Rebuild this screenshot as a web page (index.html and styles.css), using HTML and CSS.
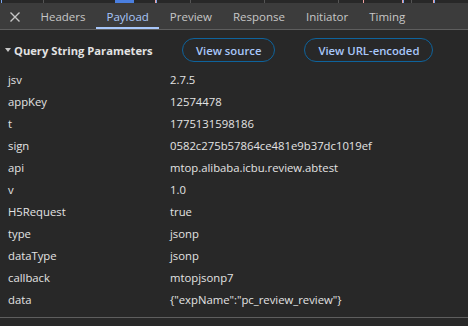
FILE: index.html
```html
<!DOCTYPE html>
<html>
<head>
<meta charset="utf-8">
<link rel="stylesheet" href="styles.css">
</head>
<body>
<div class="strip"></div>
<div class="tabbar">
  <div class="close">
    <svg width="12" height="12" viewBox="0 0 12 12"><path d="M1.5 1.5 L10.5 10.5 M10.5 1.5 L1.5 10.5" stroke="#c7c7c7" stroke-width="1.4" fill="none"/></svg>
  </div>
  <div class="tab">Headers</div>
  <div class="tab active">Payload</div>
  <div class="tab">Preview</div>
  <div class="tab">Response</div>
  <div class="tab">Initiator</div>
  <div class="tab">Timing</div>
</div>
<div class="section">
  <div class="section-head">
    <div class="title"><span class="tri"></span>Query String Parameters</div>
    <button class="btn btn-src">View source</button>
    <button class="btn btn-url">View URL-encoded</button>
  </div>
  <div class="rows">
    <div class="row"><span class="key">jsv</span><span class="val">2.7.5</span></div>
    <div class="row"><span class="key">appKey</span><span class="val">12574478</span></div>
    <div class="row"><span class="key">t</span><span class="val">1775131598186</span></div>
    <div class="row"><span class="key">sign</span><span class="val">0582c275b57864ce481e9b37dc1019ef</span></div>
    <div class="row"><span class="key">api</span><span class="val">mtop.alibaba.icbu.review.abtest</span></div>
    <div class="row"><span class="key">v</span><span class="val">1.0</span></div>
    <div class="row"><span class="key">H5Request</span><span class="val">true</span></div>
    <div class="row"><span class="key">type</span><span class="val">jsonp</span></div>
    <div class="row"><span class="key">dataType</span><span class="val">jsonp</span></div>
    <div class="row"><span class="key">callback</span><span class="val">mtopjsonp7</span></div>
    <div class="row"><span class="key">data</span><span class="val">{"expName":"pc_review_review"}</span></div>
  </div>
</div>
</body>
</html>
```
FILE: styles.css
```css
html, body {
  margin: 0;
  padding: 0;
  background: #282828;
  width: 468px;
  height: 326px;
  overflow: hidden;
  font-family: "Open Sans", "Liberation Sans", sans-serif;
  font-size: 11.3px;
}
.strip {
  height: 3px;
  background:
    linear-gradient(to right,
      #282828 0, #282828 1px, #7aa7f0 1px, #7aa7f0 2px, #282828 2px,
      #282828 43px, #555 43px, #555 44px, #282828 44px,
      #282828 115px, #4a7fe0 115px, #4a7fe0 134px, #282828 134px,
      #282828 155px, #f0a0a0 155px, #f0a0a0 156px, #7aa7f0 156px, #7aa7f0 157px, #282828 157px,
      #282828 190px, #555 190px, #555 191px, #282828 191px,
      #282828 264px, #555 264px, #555 265px, #282828 265px,
      #282828 338px, #555 338px, #555 339px, #282828 339px,
      #282828 363px, #f0a0a0 363px, #f0a0a0 364px, #282828 364px,
      #282828 402px, #f0a0a0 402px, #f0a0a0 403px, #7aa7f0 403px, #7aa7f0 404px, #282828 404px,
      #282828 411px, #555 411px, #555 412px, #282828 412px,
      #282828 433px, #f0a0a0 433px, #f0a0a0 434px, #7aa7f0 434px, #7aa7f0 435px, #282828 435px);
}
.tabbar {
  display: flex;
  align-items: stretch;
  height: 27px;
  background: #3c3c3c;
  border-bottom: 1px solid #5e5e5e;
  box-sizing: border-box;
}
.close {
  width: 30px;
  display: flex;
  align-items: center;
  justify-content: center;
  padding-top: 2px;
}
.tab {
  padding: 2px 10.5px 0;
  display: flex;
  align-items: center;
  color: #c7c7c7;
  box-sizing: border-box;
  border-bottom: 2px solid transparent;
  font-size: 11.5px;
}
.tab.active {
  color: #a8c7fa;
  border-bottom-color: #a8c7fa;
}
.section-head {
  display: flex;
  align-items: center;
  height: 36px;
  padding-top: 4px;
  box-sizing: border-box;
}
.title {
  display: flex;
  align-items: center;
  color: #e3e3e3;
  font-weight: bold;
  font-size: 11.2px;
  padding-left: 5px;
  width: 177px;
}
.tri {
  width: 0;
  height: 0;
  border-left: 3.5px solid transparent;
  border-right: 3.5px solid transparent;
  border-top: 4px solid #c7c7c7;
  margin-right: 3px;
}
.btn {
  font: inherit;
  background: transparent;
  color: #a8c7fa;
  border: 1px solid #0e639c;
  border-radius: 12px;
  height: 24px;
  padding: 0 13px;
  font-weight: 600;
  font-size: 11.3px;
}
.btn-url {
  margin-left: 29px;
}
.rows {
  padding-top: 2px;
  border-bottom: 1px solid #5e5e5e;
  padding-bottom: 7px;
}
.row {
  display: flex;
  height: 22px;
  align-items: center;
}
.key {
  width: 162px;
  padding-left: 8px;
  color: #e3e3e3;
}
.val {
  color: #e3e3e3;
}
```
